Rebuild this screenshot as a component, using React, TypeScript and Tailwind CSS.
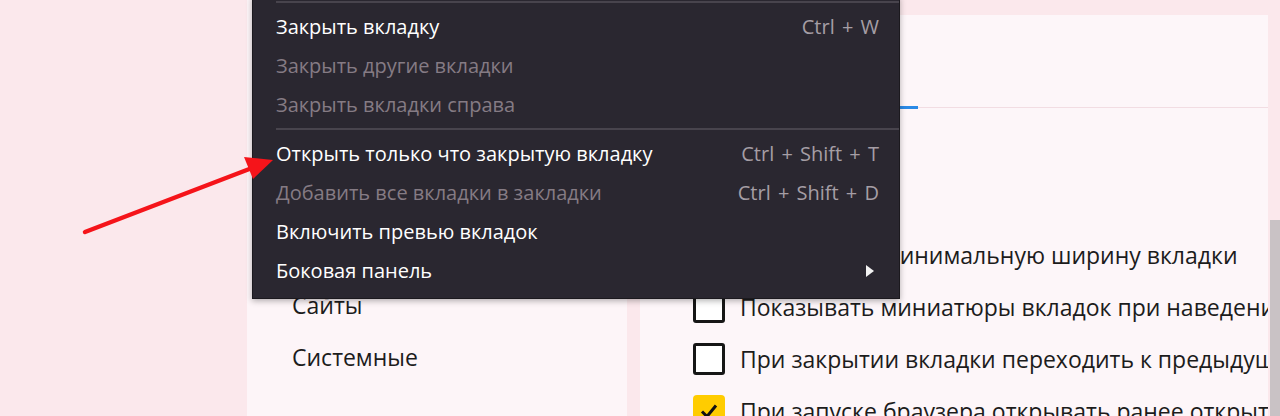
import React from "react";

const menuFont = { fontFamily: '"Open Sans", "Noto Sans", sans-serif' };

type Item = { label: string; shortcut?: string; disabled?: boolean; sub?: boolean } | "sep";

const items: Item[] = [
  "sep",
  { label: "Закрыть вкладку", shortcut: "Ctrl + W" },
  { label: "Закрыть другие вкладки", disabled: true },
  { label: "Закрыть вкладки справа", disabled: true },
  "sep",
  { label: "Открыть только что закрытую вкладку", shortcut: "Ctrl + Shift + T" },
  { label: "Добавить все вкладки в закладки", shortcut: "Ctrl + Shift + D", disabled: true },
  { label: "Включить превью вкладок" },
  { label: "Боковая панель", sub: true },
];

function Checkbox({ checked }: { checked?: boolean }) {
  if (checked) {
    return (
      <div className="w-[32px] h-[32px] shrink-0 rounded-[4px] bg-[#ffcc00] flex items-center justify-center">
        <svg width="22" height="22" viewBox="0 0 22 22">
          <path d="M4 11.5 L9 16.5 L18 5.5" fill="none" stroke="#111" strokeWidth="3" />
        </svg>
      </div>
    );
  }
  return <div className="w-[32px] h-[32px] shrink-0 rounded-[3px] border-[3px] border-[#161616] bg-white" />;
}

function Row({ text, checked }: { text: string; checked?: boolean }) {
  return (
    <div className="h-[52px] flex items-center gap-[15px] pl-[53px] whitespace-nowrap">
      <Checkbox checked={checked} />
      <span className="text-[23px] text-[#1c1c1c]">{text}</span>
    </div>
  );
}

export default function App() {
  return (
    <div
      className="relative w-[1280px] h-[416px] overflow-hidden bg-[#fbe8ec] flex"
      style={menuFont}
    >
      <div className="w-[247px] shrink-0" />
      {/* left nav panel */}
      <div className="w-[380px] shrink-0 h-full bg-[#fdf5f8] flex flex-col pt-[279px] pl-[45px] text-[23px] text-[#1c1c1c]">
        <div className="h-[52px] flex items-center">Сайты</div>
        <div className="h-[52px] flex items-center">Системные</div>
      </div>
      <div className="w-[13px] shrink-0" />
      {/* right settings panel */}
      <div className="w-[628px] shrink-0 flex flex-col mt-[15px] bg-[#fdf6f9] overflow-hidden">
        <div className="h-[93px] shrink-0 border-b border-[#f2dde3] flex items-end pl-[218px]">
          <div className="w-[60px] h-[3px] bg-[#2a8ae6] translate-y-[2px]" />
        </div>
        <div className="pt-[121px]">
          <Row text="Ограничить минимальную ширину вкладки" />
          <Row text="Показывать миниатюры вкладок при наведении курсора" />
          <Row text="При закрытии вкладки переходить к предыдущей активной" />
          <Row text="При запуске браузера открывать ранее открытые вкладки" checked />
        </div>
      </div>
      {/* scrollbar */}
      <div className="w-[12px] shrink-0 flex flex-col pt-[220px]">
        <div className="flex-1 ml-[2px] bg-[#c9c2c5]" />
      </div>

      {/* context menu */}
      <div className="absolute left-[252px] top-[-4px] w-[648px] bg-[#2a2730] border border-[#1b191e] pb-[8px] shadow-[0_2px_6px_rgba(0,0,0,0.3)]">
        {items.map((it, i) =>
          it === "sep" ? (
            <div key={i} className="h-[10px] flex items-center pl-[23px]">
              <div className="h-[2px] w-full bg-[#48444d]" />
            </div>
          ) : (
            <div key={i} className="h-[39px] flex items-center justify-between pl-[23px] pr-[20px] text-[20px] whitespace-nowrap">
              <span className={it.disabled ? "text-[#857b84]" : "text-white"}>{it.label}</span>
              {it.shortcut && <span className="text-[#a59ea5] [word-spacing:2px]">{it.shortcut}</span>}
              {it.sub && (
                <svg width="10" height="14" viewBox="0 0 10 14" className="mr-[4px]">
                  <path d="M1 1 L9 7 L1 13 Z" fill="#f2f2f2" />
                </svg>
              )}
            </div>
          )
        )}
      </div>

      {/* red arrow annotation */}
      <svg className="absolute left-0 top-0 pointer-events-none" width="1280" height="416">
        <line x1="85" y1="232" x2="252" y2="168" stroke="#f5141a" strokeWidth="4.5" strokeLinecap="round" />
        <path d="M273 160 L244 157 L253 179 Z" fill="#f5141a" />
      </svg>
    </div>
  );
}
